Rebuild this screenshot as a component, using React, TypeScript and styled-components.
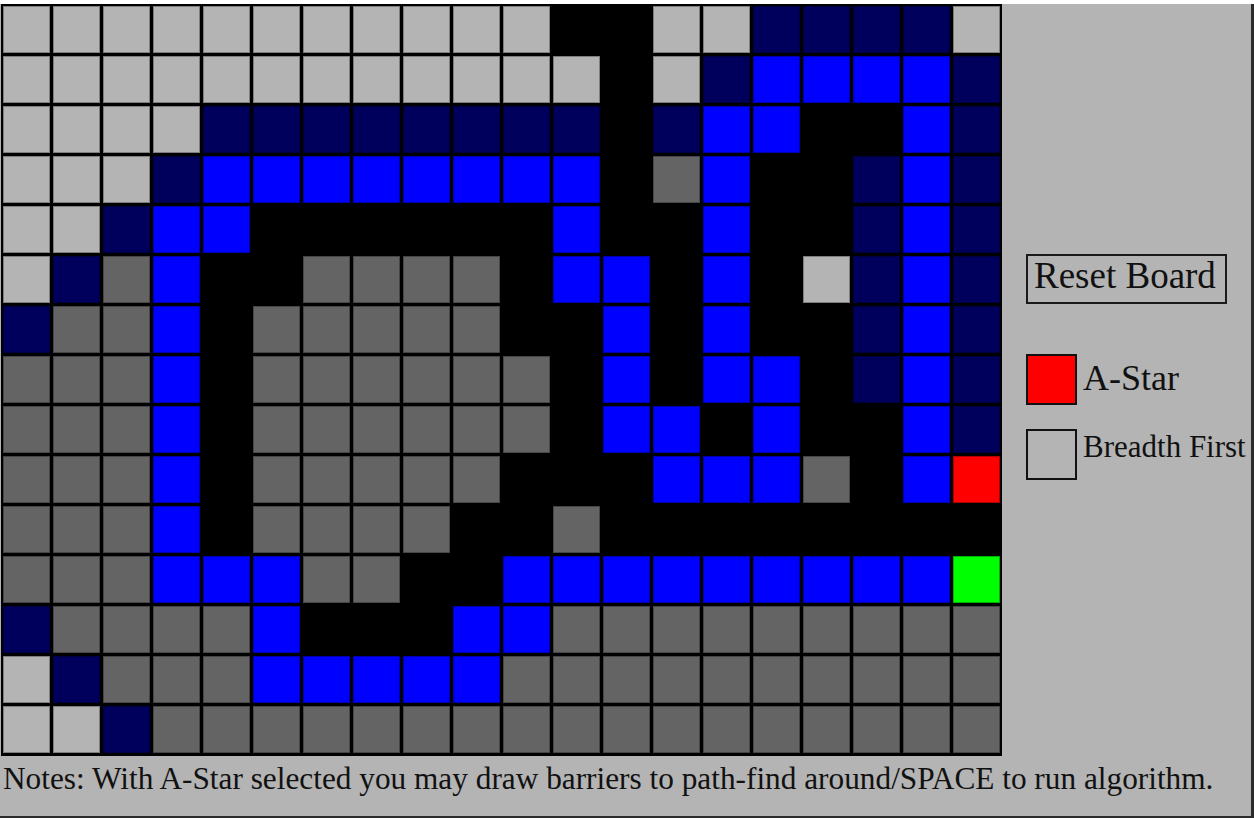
import React from 'react';
import styled, { createGlobalStyle } from 'styled-components';

type Kind = 'L' | 'N' | 'B' | 'K' | 'D' | 'R' | 'G';

const BOARD: string[] = [
  'LLLLLLLLLLLKKLLNNNNL',
  'LLLLLLLLLLLLKLNBBBBN',
  'LLLLNNNNNNNNKNBBKKBN',
  'LLLNBBBBBBBBKDBKKNBN',
  'LLNBBKKKKKKBKKBKKNBN',
  'LNDBKKDDDDKBBKBKLNBN',
  'NDDBKDDDDDKKBKBKKNBN',
  'DDDBKDDDDDDKBKBBKNBN',
  'DDDBKDDDDDDKBBKBKKBN',
  'DDDBKDDDDDKKKBBBDKBR',
  'DDDBKDDDDKKDKKKKKKKK',
  'DDDBBBDDKKBBBBBBBBBG',
  'NDDDDBKKKBBDDDDDDDDD',
  'LNDDDBBBBBDDDDDDDDDD',
  'LLNDDDDDDDDDDDDDDDDD',
];

const COLORS: Record<Kind, string> = {
  L: '#b4b4b4',
  N: '#00005c',
  B: '#0000ff',
  K: '#000000',
  D: '#646464',
  R: '#ff0000',
  G: '#00ff00',
};

const App = () => {
  return (
    <>
      <GlobalStyle />
      <Window>
        <Main>
          <Board>
            {BOARD.map((row, r) =>
              row.split('').map((k, c) => (
                <Cell key={`${r}-${c}`} $kind={k as Kind} />
              )),
            )}
          </Board>

          <SidePanel>
            <ResetButton>Reset Board</ResetButton>

            <Options>
              <Option>
                <Swatch $selected />
                <BigLabel>A-Star</BigLabel>
              </Option>
              <Option $top>
                <Swatch />
                <SmallLabel>Breadth First</SmallLabel>
              </Option>
            </Options>
          </SidePanel>
        </Main>

        <Notes>
          Notes: With A-Star selected you may draw barriers to path-find
          around/SPACE to run algorithm.
        </Notes>
      </Window>
    </>
  );
};

export default App;

const GlobalStyle = createGlobalStyle`
  html, body {
    margin: 0;
    padding: 0;
    background-color: #2b2b2b;
    overflow: hidden;
  }

  body {
    width: 1254px;
    height: 818px;
    border-top: 4px solid #ffffff;
    box-sizing: border-box;
  }
`;

const Window = styled.div`
  width: 1251px;
  height: 812px;
  background-color: #b4b4b4;
  display: flex;
  flex-direction: column;
  font-family: 'Liberation Serif', 'Times New Roman', serif;
  color: #111;
`;

const Main = styled.div`
  display: flex;
  align-items: flex-start;
  padding-left: 1px;
`;

const Board = styled.div`
  display: grid;
  grid-template-columns: repeat(20, 47px);
  grid-auto-rows: 47px;
  gap: 3px;
  padding: 2px 2px 3px 2px;
  background-color: #000;
`;

const Cell = styled.div<{ $kind: Kind }>`
  box-sizing: border-box;
  background-color: ${({ $kind }) => COLORS[$kind]};
  border: 1px solid rgba(0, 0, 0, 0.3);
`;

const SidePanel = styled.div`
  display: flex;
  flex-direction: column;
  align-items: flex-start;
  padding-top: 250px;
  padding-left: 24px;
`;

const ResetButton = styled.div`
  box-sizing: border-box;
  width: 201px;
  height: 50px;
  border: 2px solid #1a1a1a;
  font-size: 37px;
  line-height: 40px;
  padding-left: 6px;
  white-space: nowrap;
`;

const Options = styled.div`
  display: flex;
  flex-direction: column;
  gap: 24px;
  margin-top: 50px;
`;

const Option = styled.div<{ $top?: boolean }>`
  display: flex;
  align-items: ${({ $top }) => ($top ? 'flex-start' : 'center')};
  gap: 6px;
  white-space: nowrap;
`;

const Swatch = styled.div<{ $selected?: boolean }>`
  box-sizing: border-box;
  width: 51px;
  height: 51px;
  border: 2px solid #111;
  background-color: ${({ $selected }) => ($selected ? '#ff0000' : '#b4b4b4')};
`;

const BigLabel = styled.span`
  font-size: 36px;
  line-height: 40px;
  margin-top: -4px;
`;

const SmallLabel = styled.span`
  font-size: 31px;
  line-height: 36px;
`;

const Notes = styled.div`
  margin-top: 5px;
  padding-left: 3px;
  font-size: 31.3px;
  line-height: 36px;
  white-space: nowrap;
`;
